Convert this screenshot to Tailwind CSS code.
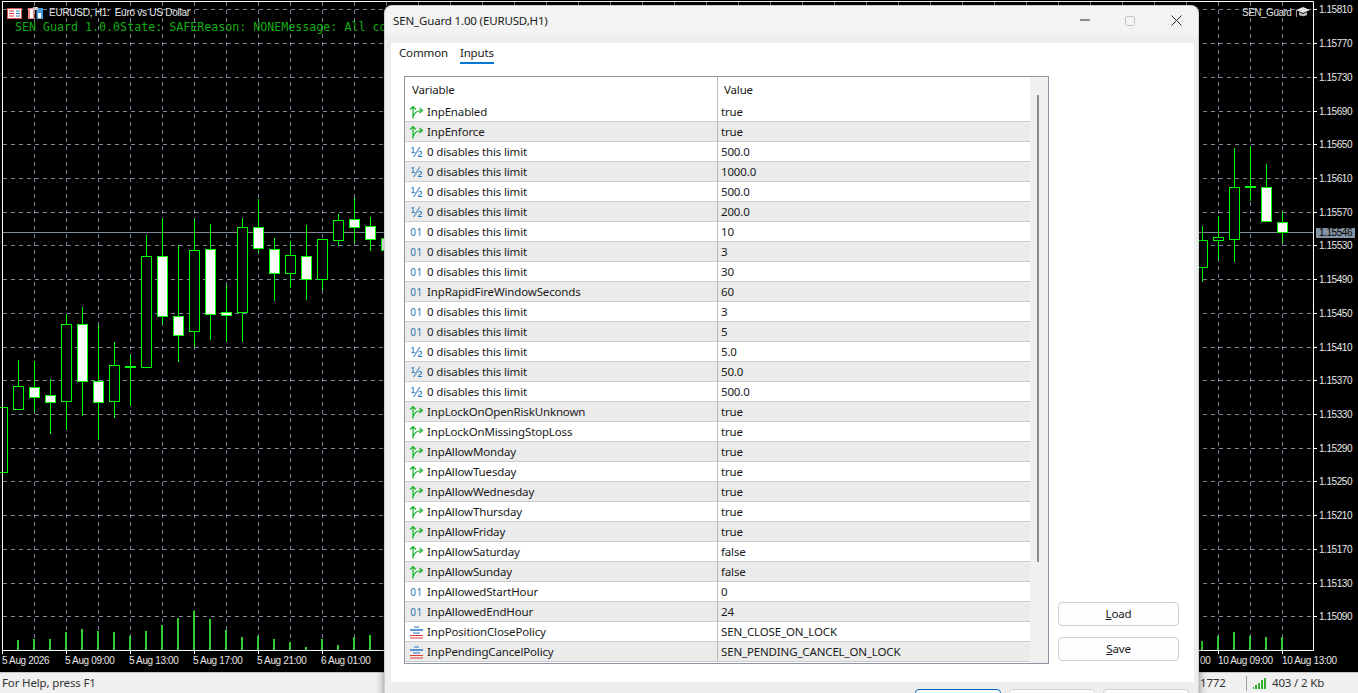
<!DOCTYPE html>
<html lang="en">

<head>
  <meta charset="UTF-8">
  <title>SEN_Guard 1.00 (EURUSD,H1)</title>
  <script src="https://cdn.jsdelivr.net/npm/@tailwindcss/browser@4"></script>
</head>

<body class="bg-black">
  <div class="relative w-[1358px] h-[693px] overflow-hidden flex flex-col font-['Noto_Sans',sans-serif]">

    <!-- Chart -->
    <div class="relative h-[672px] bg-black shrink-0">
      <svg id="chart" width="1358" height="672" class="block font-['Liberation_Sans',sans-serif]"></svg>
      <div class="absolute left-[7px] top-[7px] flex items-center gap-[6px]">
        <svg width="15" height="11" viewBox="0 0 15 11">
          <rect x="0.5" y="0.5" width="14" height="10" fill="#fff" stroke="#d9534f" />
          <path d="M2 3h5M2 5.500h5M2 8h5" stroke="#d9302c" />
          <path d="M9 3h4M9 5.500h4M9 8h4" stroke="#2f7fc8" />
        </svg>
        <svg width="15" height="12" viewBox="0 0 15 12">
          <path d="M0 1h6.500v11H0z" fill="#f08a80" />
          <path d="M2 2h3v9H2z" fill="#fff" />
          <path d="M8.500 1H15v11H8.500z" fill="#4a9bd8" />
          <path d="M10 6h3v5h-3z" fill="#fff" />
          <path d="M5 0h5v3H5z" fill="#c8c8c8" />
        </svg>
      </div>
      <div class="absolute left-[49px] top-[6px] text-[10px] leading-[13px] tracking-[-0.25px] text-[#e8e8e8] whitespace-pre font-['Liberation_Sans',sans-serif]">EURUSD, H1:  Euro vs US Dollar</div>
      <div class="absolute left-[15px] top-[20px] text-[11.65px] leading-[14px] text-[#12ad12] whitespace-pre font-['DejaVu_Sans_Mono',monospace]">SEN Guard 1.0.0State: SAFEReason: NONEMessage: All co</div>
      <div class="absolute left-[1242px] top-[5px] flex items-center gap-[4px]">
        <span class="text-[10px] leading-[13px] tracking-[-0.5px] text-[#e0e0e0] font-['Liberation_Sans',sans-serif]">SEN_Guard</span>
        <svg width="16" height="14" viewBox="0 0 16 14">
          <path d="M8 2 15 5 8 8 1 5z" fill="#e4e4e4" />
          <path d="M4 7v3c2 1.500 6 1.500 8 0V7L8 9z" fill="#bdbdbd" />
          <path d="M1.500 5v7" stroke="#9a9a9a" />
        </svg>
      </div>
      <div class="absolute left-[1316px] top-[228px] w-[39px] h-[10px] bg-[#8494a4] text-[10px] leading-[10px] text-black text-center font-['Liberation_Sans',sans-serif] tracking-[-0.45px]">1.15546</div>
    </div>

    <!-- Status bar -->
    <div class="h-[21px] bg-[#f0f0f0] border-t border-[#c8c8c8] flex items-center text-[11.5px] tracking-[-0.15px] text-[#333]">
      <span class="ml-[2px] w-[94px]">For Help, press F1</span>
      <span class="ml-[1104px] w-[46px]">1772</span>
      <span class="w-px h-[15px] bg-[#a0a0a0]"></span>
      <span class="ml-[6px] flex items-end gap-px h-[12px]">
        <i class="block w-[1px] h-[2px] bg-[#35b035]"></i>
        <i class="block w-[2px] h-[4px] bg-[#35b035]"></i>
        <i class="block w-[2px] h-[6px] bg-[#35b035]"></i>
        <i class="block w-[2px] h-[9px] bg-[#35b035]"></i>
        <i class="block w-[2px] h-[11px] bg-[#35b035]"></i>
      </span>
      <span class="ml-[6px]">403 / 2 Kb</span>
    </div>

    <!-- Inputs dialog -->
    <div class="absolute left-[384px] top-[5px] w-[815px] h-[700px] bg-[#eeeeee] rounded-t-[8px] border border-[#cfcfcf] border-b-0 shadow-[0_0_8px_rgba(0,0,0,0.45)] flex flex-col text-[11.5px] tracking-[-0.15px] text-[#1a1a1a]">
      <div class="h-[29px] shrink-0 bg-[#f3f3f3] rounded-t-[8px] flex items-center pl-[8px]">
        <span class="flex-1">SEN_Guard 1.00 (EURUSD,H1)</span>
        <svg width="10" height="2" viewBox="0 0 10 2" class="mr-[35px] -translate-y-px"><path d="M0 1h10" stroke="#222" /></svg>
        <svg width="10" height="10" viewBox="0 0 10 10" class="mr-[36px]"><rect x="0.5" y="0.5" width="9" height="9" rx="1" fill="none" stroke="#c4c4c4" /></svg>
        <svg width="11" height="11" viewBox="0 0 11 11" class="mr-[16px]"><path d="M0.500 0.500l10 10M10.500 0.500l-10 10" stroke="#222" /></svg>
      </div>
      <div class="h-[8px] shrink-0"></div>
      <div class="ml-[6px] mr-[4px] h-[639px] shrink-0 bg-white flex flex-col">
        <div class="h-[21px] flex items-end pl-[8px] gap-[12px] shrink-0">
          <span class="h-[21px] leading-[20px]">Common</span>
          <span class="h-[21px] leading-[20px] border-b-2 border-[#0078d4]">Inputs</span>
        </div>
        <div class="flex pl-[13px] pt-[12px]">
          <div class="w-[645px] h-[588px] border border-[#8b95a5] flex shrink-0">
            <div class="w-[625px] flex flex-col">
              <div class="h-[25px] shrink-0 flex items-center">
                <div class="w-[313px] pl-[7px] h-full flex items-center border-r border-[#b8b8b8]">Variable</div>
                <div class="pl-[6px]">Value</div>
              </div>
              <div id="rows"></div>
            </div>
            <div class="flex-1 bg-[#f0f0f0] pl-[7px] pt-[18px]">
              <div class="w-[2px] h-[467px] bg-[#8a8a8a]"></div>
            </div>
          </div>
          <div class="flex flex-col pl-[9px] pt-[526px] gap-[11px]">
            <div class="w-[121px] h-[24px] rounded-[4px] border border-[#d0d0d0] bg-[#fdfdfd] flex items-center justify-center"><span><span class="underline">L</span>oad</span></div>
            <div class="w-[121px] h-[24px] rounded-[4px] border border-[#d0d0d0] bg-[#fdfdfd] flex items-center justify-center"><span><span class="underline">S</span>ave</span></div>
          </div>
        </div>
      </div>
      <div class="flex gap-[8px] pl-[530px] pt-[7px]">
        <div class="w-[86px] h-[24px] rounded-[4px] border border-[#0067c0] bg-[#fdfdfd]"></div>
        <div class="w-[86px] h-[24px] rounded-[4px] border border-[#d0d0d0] bg-[#fdfdfd]"></div>
        <div class="w-[86px] h-[24px] rounded-[4px] border border-[#d0d0d0] bg-[#fdfdfd]"></div>
      </div>
    </div>
  </div>

  <script>
    // input rows: type, name, value
    const L = '0 disables this limit';
    const inputs = [
      ['b', 'InpEnabled', 'true'], ['b', 'InpEnforce', 'true'],
      ['d', L, '500.0'], ['d', L, '1000.0'], ['d', L, '500.0'], ['d', L, '200.0'],
      ['i', L, '10'], ['i', L, '3'], ['i', L, '30'],
      ['i', 'InpRapidFireWindowSeconds', '60'],
      ['i', L, '3'], ['i', L, '5'],
      ['d', L, '5.0'], ['d', L, '50.0'], ['d', L, '500.0'],
      ['b', 'InpLockOnOpenRiskUnknown', 'true'], ['b', 'InpLockOnMissingStopLoss', 'true'],
      ['b', 'InpAllowMonday', 'true'], ['b', 'InpAllowTuesday', 'true'], ['b', 'InpAllowWednesday', 'true'],
      ['b', 'InpAllowThursday', 'true'], ['b', 'InpAllowFriday', 'true'],
      ['b', 'InpAllowSaturday', 'false'], ['b', 'InpAllowSunday', 'false'],
      ['i', 'InpAllowedStartHour', '0'], ['i', 'InpAllowedEndHour', '24'],
      ['e', 'InpPositionClosePolicy', 'SEN_CLOSE_ON_LOCK'], ['e', 'InpPendingCancelPolicy', 'SEN_PENDING_CANCEL_ON_LOCK']
    ];
    const icons = {
      b: '<svg width="15" height="14" viewBox="0 0 15 14" fill="none" stroke="#17b32f" stroke-width="1.200"><path d="M4 13.500V1.500M1 4.500l3-3 3 3M4 12C5 8 7 5.500 13 5.500M10.500 3l3 2.500-3 2.500"/></svg>',
      d: '<span class="block w-[15px] text-[14px] leading-[14px] tracking-normal text-[#1f78c4] text-center font-[\'Liberation_Sans\',sans-serif]">½</span>',
      i: '<span class="block w-[15px] text-[10px] leading-[14px] tracking-[0.5px] text-[#2a78b8] text-center font-[\'DejaVu_Sans\',sans-serif]">01</span>',
      e: '<svg width="15" height="14" viewBox="0 0 15 14" fill="none"><path d="M5 2h5M4 8h7" stroke="#2a78c8"/><path d="M1 5h13" stroke="#2a78c8" stroke-width="1.500"/><path d="M1 10.500h13M1 13h13" stroke="#e23b3b"/></svg>'
    };
    document.getElementById('rows').innerHTML = inputs.map((r, i) => `
      <div class="h-[20px] flex border-b border-[#cccccc] ${i % 2 ? 'bg-[#ebebeb]' : 'bg-white'}">
        <div class="w-[313px] flex items-center pl-[4px] gap-[3px] border-r border-[#b8b8b8]">${icons[r[0]]}<span>${r[1]}</span></div>
        <div class="pl-[3px] flex items-center">${r[2]}</div>
      </div>`).join('');

    // chart
    const out = [];
    const GRID = '#778899', GREEN = '#00ff00';
    const hy = [9, 43, 77, 111, 144, 178, 212, 245, 279, 313, 347, 380, 414, 448, 481, 515, 549, 583, 616];
    for (let x = 34; x <= 1282; x += 32) out.push(`<path d="M${x + .5} 2V650" stroke="${GRID}" stroke-dasharray="4 4"/>`);
    hy.forEach(y => out.push(`<path d="M3 ${y + .5}H1313" stroke="${GRID}" stroke-dasharray="4 4"/>`));
    out.push(`<path d="M3 232.500H1313" stroke="#7f8c9a"/>`);

    // volumes
    const vols = [640, 639, 639, 632, 629, 631, 632, 636, 631, 625, 618, 611, 619, 630, 637, 636, 639, 642, 647, 639, 645, 637, 635];
    vols.forEach((t, i) => out.push(`<rect x="${17 + 16 * i}" y="${t}" width="2" height="${650 - t}" fill="#32cd32"/>`));
    [[1201, 641], [1217, 636], [1233, 632], [1249, 636], [1265, 637], [1281, 637]].forEach(v =>
      out.push(`<rect x="${v[0]}" y="${v[1]}" width="2" height="${650 - v[1]}" fill="#32cd32"/>`));

    // candles: x, wick top, wick bottom, body top, body bottom, fill
    const candles = [
      [2, 407, 472, 407, 472, 0], [18, 360, 410, 386, 409, 0], [34, 361, 412, 387, 397, 1], [50, 379, 434, 395, 402, 1],
      [66, 314, 430, 324, 401, 0], [82, 307, 416, 324, 381, 1], [98, 325, 440, 381, 402, 1], [114, 342, 418, 365, 401, 0],
      [130, 355, 406, 367, 367, 2], [146, 235, 367, 256, 367, 0], [162, 218, 324, 256, 316, 1], [178, 245, 362, 316, 335, 1],
      [194, 219, 347, 250, 331, 0], [210, 224, 340, 249, 314, 1], [226, 285, 342, 312, 315, 1], [242, 218, 342, 227, 312, 0],
      [258, 199, 253, 227, 248, 1], [274, 238, 301, 249, 273, 1], [290, 241, 288, 255, 273, 0], [306, 225, 300, 256, 279, 1],
      [322, 239, 290, 239, 279, 0], [338, 214, 246, 220, 240, 0], [354, 198, 243, 219, 227, 1], [370, 217, 251, 226, 239, 1],
      [386, 238, 250, 238, 250, 1], [1202, 226, 282, 240, 267, 0], [1218, 216, 260, 237, 240, 0], [1234, 148, 262, 187, 239, 0],
      [1250, 146, 201, 187, 187, 2], [1266, 164, 222, 187, 221, 1], [1282, 212, 243, 222, 232, 1]
    ];
    candles.forEach(c => {
      const [x, wt, wb, bt, bb, f] = c;
      out.push(`<path d="M${x + .5} ${wt}V${wb}" stroke="${GREEN}"/>`);
      if (f === 2) out.push(`<rect x="${x - 5}" y="${bt - 1}" width="11" height="2" fill="${GREEN}"/>`);
      else out.push(`<rect x="${x - 4.5}" y="${bt + .5}" width="10" height="${bb - bt}" fill="${f ? '#fff' : '#000'}" stroke="${GREEN}"/>`);
    });

    // axes
    out.push(`<path d="M2.500 1V650.500M2 1.500H1313.500V650.500H2" fill="none" stroke="#fff"/>`);
    hy.forEach((y, i) => {
      out.push(`<path d="M1313 ${y + .5}h4" stroke="#fff"/>`);
      out.push(`<text x="1319" y="${y + 4}" font-size="10" letter-spacing="-0.45" fill="#e8e8e8">${(1.1581 - i * 0.0004).toFixed(5)}</text>`);
    });
    [2, 66, 130, 194, 258, 322, 1218, 1282].forEach(x => out.push(`<path d="M${x + .5} 650v4" stroke="#fff"/>`));
    [[2, '5 Aug 2026'], [65, '5 Aug 09:00'], [129, '5 Aug 13:00'], [193, '5 Aug 17:00'], [257, '5 Aug 21:00'], [321, '6 Aug 01:00'],
     [1218, '10 Aug 09:00'], [1282, '10 Aug 13:00'], [1200, '00']].forEach(t =>
      out.push(`<text x="${t[0]}" y="664" font-size="10" letter-spacing="-0.35" fill="#e8e8e8">${t[1]}</text>`));
    document.getElementById('chart').innerHTML = out.join('');
  </script>
</body>

</html>
